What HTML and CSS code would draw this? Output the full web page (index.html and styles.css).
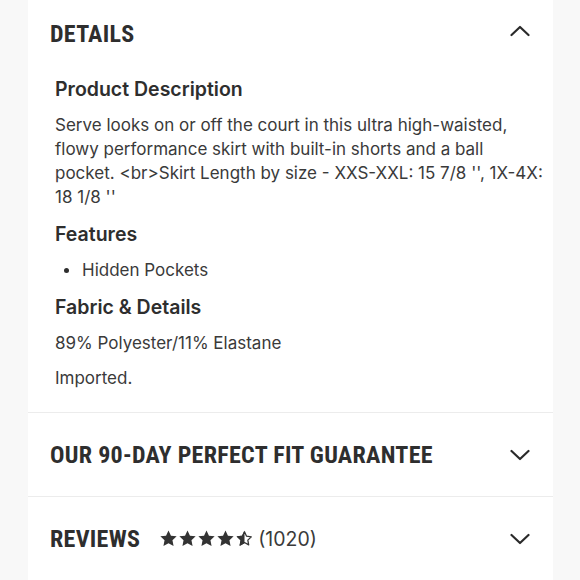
FILE: index.html
```html
<!DOCTYPE html>
<html>
<head>
<meta charset="utf-8">
<title>Product Details</title>
<link rel="stylesheet" href="styles.css">
</head>
<body>
  <div class="panel">
    <section class="section">
      <div class="section-header section-header-top">
        <h2 class="section-title">Details</h2>
        <svg class="chevron chevron-up" viewBox="0 0 20 12" width="20" height="12"><path d="M1.5 10 L10 2 L18.5 10" /></svg>
      </div>
      <div class="section-body">
        <h3 class="sub-title">Product Description</h3>
        <p class="copy">Serve looks on or off the court in this ultra high-waisted, flowy performance skirt with built-in shorts and a ball pocket. &lt;br&gt;Skirt Length by size - XXS-XXL: 15 7/8 '', 1X-4X: 18 1/8 ''</p>
        <h3 class="sub-title">Features</h3>
        <ul class="features">
          <li>Hidden Pockets</li>
        </ul>
        <h3 class="sub-title">Fabric &amp; Details</h3>
        <p class="copy">89% Polyester/11% Elastane</p>
        <p class="copy">Imported.</p>
      </div>
    </section>
    <section class="section">
      <div class="section-header">
        <h2 class="section-title">Our 90-Day Perfect Fit Guarantee</h2>
        <svg class="chevron" viewBox="0 0 20 12" width="20" height="12"><path d="M1.5 2 L10 10 L18.5 2" /></svg>
      </div>
    </section>
    <section class="section">
      <div class="section-header">
        <div class="reviews">
          <h2 class="section-title">Reviews</h2>
          <div class="stars">
            <svg viewBox="0 0 24 24" width="19" height="19"><path class="star-full" d="M12 1.8l3.1 6.6 7.2.9-5.3 5 1.4 7.1L12 17.9l-6.4 3.5L7 14.3l-5.3-5 7.2-.9z"/></svg>
            <svg viewBox="0 0 24 24" width="19" height="19"><path class="star-full" d="M12 1.8l3.1 6.6 7.2.9-5.3 5 1.4 7.1L12 17.9l-6.4 3.5L7 14.3l-5.3-5 7.2-.9z"/></svg>
            <svg viewBox="0 0 24 24" width="19" height="19"><path class="star-full" d="M12 1.8l3.1 6.6 7.2.9-5.3 5 1.4 7.1L12 17.9l-6.4 3.5L7 14.3l-5.3-5 7.2-.9z"/></svg>
            <svg viewBox="0 0 24 24" width="19" height="19"><path class="star-full" d="M12 1.8l3.1 6.6 7.2.9-5.3 5 1.4 7.1L12 17.9l-6.4 3.5L7 14.3l-5.3-5 7.2-.9z"/></svg>
            <svg viewBox="0 0 24 24" width="19" height="19">
              <path class="star-outline" d="M12 3.6l2.6 5.5 6 .8-4.4 4.2 1.1 5.9L12 17.1l-5.3 2.9 1.1-5.9-4.4-4.2 6-.8z"/>
              <path class="star-full" d="M12 1.8V17.9l-6.4 3.5L7 14.3l-5.3-5 7.2-.9z"/>
            </svg>
          </div>
          <span class="count">(1020)</span>
        </div>
        <svg class="chevron" viewBox="0 0 20 12" width="20" height="12"><path d="M1.5 2 L10 10 L18.5 2" /></svg>
      </div>
    </section>
  </div>
</body>
</html>
```

FILE: styles.css
```css
html, body { margin: 0; padding: 0; background: #f8f8f8; font-family: "Inter", "Liberation Sans", sans-serif; color: #3a3a3a; }
.panel { width: 525px; margin-left: 28px; background: #fff; }
.section { border-bottom: 1px solid #ececec; }
.section-header { display: flex; align-items: center; justify-content: space-between; height: 83px; padding: 0 23px 0 22px; }
.section-header-top { height: 68px; }
.section-title { margin: 0; font-family: "Roboto", sans-serif; font-stretch: condensed; font-weight: bold; font-size: 24px; letter-spacing: 0.3px; text-transform: uppercase; color: #2e2e2e; }
.chevron path { fill: none; stroke: #2a2a2a; stroke-width: 2.2; stroke-linecap: round; stroke-linejoin: round; }
.chevron-up { margin-bottom: 6px; }
.section-body { padding: 8px 7px 22px 27px; }
.sub-title { margin: 0 0 11px; font-size: 19.5px; line-height: 26px; font-weight: 600; color: #2e2e2e; }
.copy { margin: 0 0 11px; font-size: 17px; line-height: 24px; }
.copy:first-of-type { margin-bottom: 12px; }
.copy:last-child { margin-bottom: 0; }
.features { margin: 0 0 12px; padding: 0; list-style: none; font-size: 17px; line-height: 24px; }
.features li { display: flex; align-items: center; }
.features li::before { content: ""; width: 5px; height: 5px; border-radius: 50%; background: #2e2e2e; margin: 0 13px 0 9px; }
.reviews { display: flex; align-items: center; }
.stars { display: flex; margin-left: 19px; }
.star-full { fill: #333; }
.star-outline { fill: none; stroke: #333; stroke-width: 1.6; stroke-linejoin: round; }
.count { margin-left: 4px; font-size: 19.5px; color: #3a3a3a; }
```
